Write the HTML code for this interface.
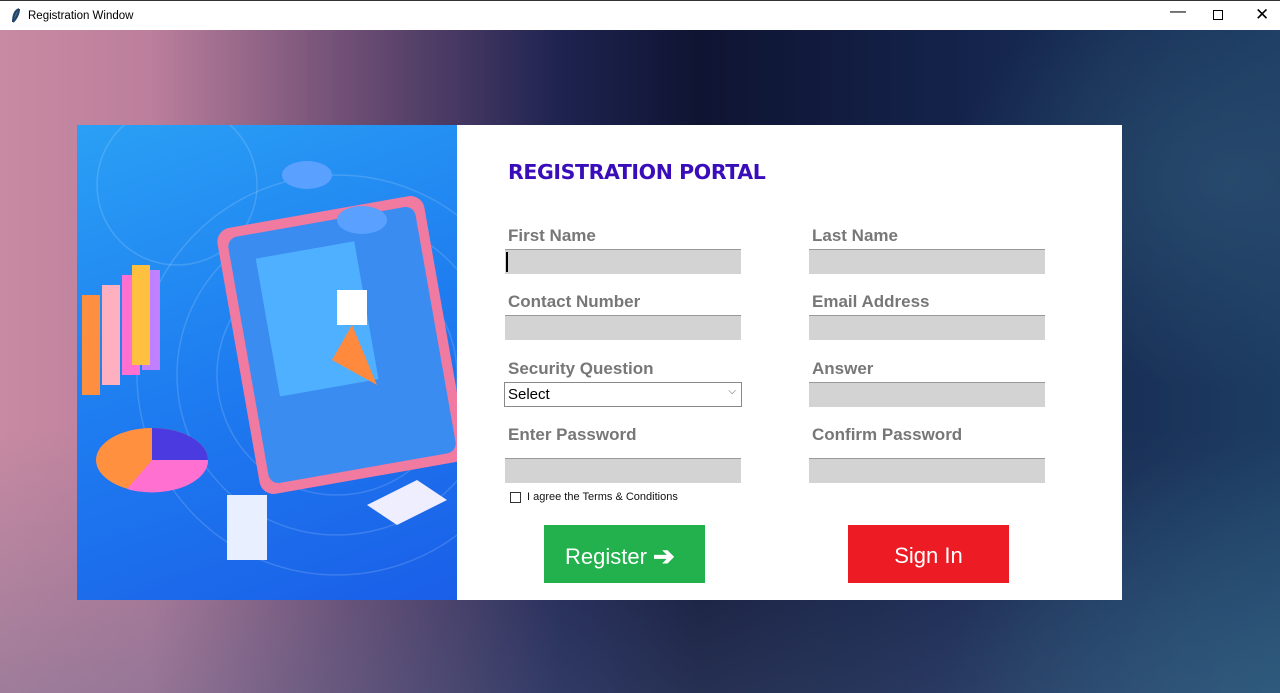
<!DOCTYPE html>
<html><head><style>
*{margin:0;padding:0;box-sizing:border-box}
body{width:1280px;height:693px;overflow:hidden;font-family:"Liberation Sans",sans-serif;position:relative;background:#fff}
.title{position:absolute;left:0;top:0;width:1280px;height:30px;background:#fff;border-top:1px solid #333}
.title span{position:absolute;left:28px;top:9px;font-size:11.5px;color:#000}
.bg{position:absolute;left:0;top:30px;width:1280px;height:663px;
background:
radial-gradient(ellipse 500px 400px at 1280px 693px,rgba(30,90,120,.9),rgba(30,90,120,0) 70%),
radial-gradient(ellipse 400px 300px at 1230px 150px,rgba(40,75,110,.9),rgba(40,75,110,0) 70%),
linear-gradient(90deg,#c88aa2 0px,#bc7f9c 150px,#6e4e74 350px,#1e2350 560px,#0f1432 700px,#14224a 950px,#1d3c62 1280px);}
.bg2{position:absolute;left:0;top:30px;width:1280px;height:663px;background:linear-gradient(180deg,rgba(0,0,0,0) 60%,rgba(80,100,140,.35) 100%)}
.card{position:absolute;left:77px;top:125px;width:1045px;height:475px;background:#fff}
.img{position:absolute;left:77px;top:125px;width:380px;height:475px;background:linear-gradient(160deg,#2aa0f5,#1e7cf0 50%,#1a5fe8);overflow:hidden}
.lbl{position:absolute;font-weight:bold;color:#777;font-family:"Liberation Sans",sans-serif;font-size:17px}
.inp{position:absolute;width:236px;height:25px;background:#d3d3d3;border-top:1px solid #999}
h1{position:absolute;left:508px;top:160px;font-size:20.5px;color:#3a0dbb;font-family:"DejaVu Sans",sans-serif;font-weight:bold;letter-spacing:-.4px}
</style></head><body>
<div class="title"><svg style="position:absolute;left:11px;top:7px" width="10" height="15"><path d="M8 1 C3 3 2 9 2 14 M8 1 C8 6 5 11 2 14" stroke="#246" stroke-width="2" fill="#468"/></svg><span>Registration Window</span>
<span style="left:1170px;top:2px;font-size:16px">—</span>
<div style="position:absolute;left:1213px;top:9px;width:10px;height:10px;border:1px solid #000"></div>
<span style="left:1255px;top:4px;font-size:17px">✕</span></div>
<div class="bg"></div><div class="bg2"></div>
<div class="card"></div>
<div class="img">
<svg width="380" height="475">
<g fill="none" stroke="rgba(255,255,255,.15)" stroke-width="1.5"><circle cx="260" cy="250" r="120"/><circle cx="260" cy="250" r="160"/><circle cx="260" cy="250" r="200"/><circle cx="100" cy="60" r="80"/></g>
<rect x="160" y="85" width="210" height="270" rx="14" fill="#f07aa0" transform="rotate(-10 265 220)"/>
<rect x="170" y="95" width="190" height="250" rx="10" fill="#3a8cf0" transform="rotate(-10 265 220)"/>
<rect x="195" y="120" width="100" height="140" fill="#4fb0ff" transform="rotate(-10 265 220)"/>
<path d="M255 235 L275 200 L300 260 Z" fill="#ff8a3d"/>
<rect x="260" y="165" width="30" height="35" fill="#fff"/>
<g fill="#ff8f40"><rect x="5" y="170" width="18" height="100"/><rect x="25" y="160" width="18" height="100" fill="#ffb0c0"/><rect x="45" y="150" width="18" height="100" fill="#ff70d0"/><rect x="65" y="145" width="18" height="100" fill="#c080ff"/><rect x="55" y="140" width="18" height="100" fill="#ffc040"/></g>
<ellipse cx="75" cy="335" rx="56" ry="32" fill="#ff9040"/><path d="M75 335 L75 303 A56 32 0 0 1 131 335Z" fill="#4a3ae0"/><path d="M75 335 L131 335 A56 32 0 0 1 50 364Z" fill="#ff70d0"/>
<path d="M290 380 L340 355 L370 375 L320 400Z" fill="#eef"/>
<rect x="150" y="370" width="40" height="65" fill="#e8f0ff"/>
<ellipse cx="230" cy="50" rx="25" ry="14" fill="#5aa0ff"/><ellipse cx="285" cy="95" rx="25" ry="14" fill="#5aa0ff"/>
</svg></div>
<h1>REGISTRATION PORTAL</h1>
<div class="lbl" style="left:508px;top:226px">First Name</div>
<div class="lbl" style="left:812px;top:226px">Last Name</div>
<div class="inp" style="left:505px;top:249px"><div style="position:absolute;left:1px;top:2px;width:2px;height:20px;background:#000"></div></div>
<div class="inp" style="left:809px;top:249px"></div>
<div class="lbl" style="left:508px;top:292px">Contact Number</div>
<div class="lbl" style="left:812px;top:292px">Email Address</div>
<div class="inp" style="left:505px;top:315px"></div>
<div class="inp" style="left:809px;top:315px"></div>
<div class="lbl" style="left:508px;top:359px">Security Question</div>
<div class="lbl" style="left:812px;top:359px">Answer</div>
<div style="position:absolute;left:504px;top:382px;width:238px;height:25px;border:1px solid #888;background:#fff;font-size:15px;padding:3px 3px">Select<span style="position:absolute;right:5px;top:3px;font-size:10px;color:#555">⌵</span></div>
<div class="inp" style="left:809px;top:382px"></div>
<div class="lbl" style="left:508px;top:425px">Enter Password</div>
<div class="lbl" style="left:812px;top:425px">Confirm Password</div>
<div class="inp" style="left:505px;top:458px"></div>
<div class="inp" style="left:809px;top:458px"></div>
<div style="position:absolute;left:510px;top:492px;width:11px;height:11px;border:1px solid #333;background:#fff"></div>
<div style="position:absolute;left:527px;top:491px;font-size:11px;color:#111">I agree the Terms &amp; Conditions</div>
<div style="position:absolute;left:544px;top:525px;width:161px;height:58px;background:#22b14c;color:#fff;font-size:22px;padding:15px 0 0 21px">Register <span style="font-weight:bold;font-size:26px;position:relative;top:1px">➔</span></div>
<div style="position:absolute;left:848px;top:525px;width:161px;height:58px;background:#ed1c24;color:#fff;font-size:22px;text-align:center;padding-top:18px">Sign In</div>
</body></html>
